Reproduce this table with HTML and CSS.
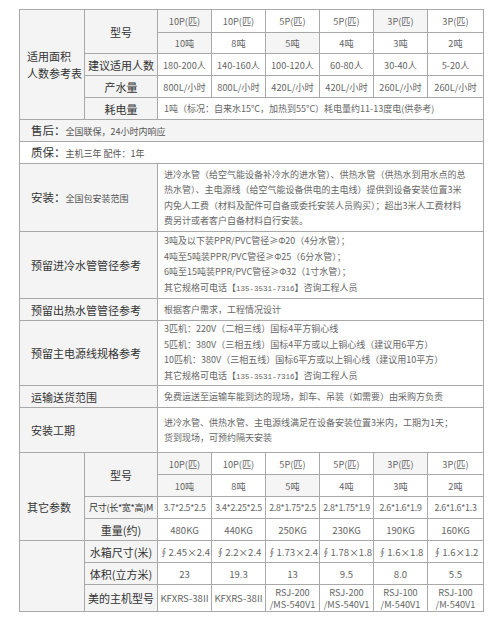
FILE: index.html
```html
<!DOCTYPE html>
<html lang="zh">
<head>
<meta charset="utf-8">
<link rel="stylesheet" href="styles.css">
</head>
<body>
<div class="page">
<table class="spec">
  <colgroup>
    <col class="c1"><col class="c2"><col class="cm"><col class="cm"><col class="cm"><col class="cm"><col class="cm"><col class="cl">
  </colgroup>
  <tbody>
    <tr class="h23">
      <td class="lab gray side" rowspan="5">适用面积<br>人数参考表</td>
      <td class="lab gray" rowspan="2">型号</td>
      <td class="val shade">10P(匹)</td><td class="val">10P(匹)</td><td class="val">5P(匹)</td><td class="val">5P(匹)</td><td class="val shade">3P(匹)</td><td class="val">3P(匹)</td>
    </tr>
    <tr class="h21">
      <td class="val shade">10吨</td><td class="val">8吨</td><td class="val shade">5吨</td><td class="val">4吨</td><td class="val">3吨</td><td class="val">2吨</td>
    </tr>
    <tr class="h22">
      <td class="lab gray">建议适用人数</td>
      <td class="val">180-200人</td><td class="val">140-160人</td><td class="val">100-120人</td><td class="val">60-80人</td><td class="val">30-40人</td><td class="val">5-20人</td>
    </tr>
    <tr class="h22">
      <td class="lab gray">产水量</td>
      <td class="val">800L/小时</td><td class="val">800L/小时</td><td class="val">420L/小时</td><td class="val">420L/小时</td><td class="val">260L/小时</td><td class="val">260L/小时</td>
    </tr>
    <tr class="h22">
      <td class="lab gray">耗电量</td>
      <td class="txt" colspan="6">1吨（标况：自来水15°C，加热到55°C）耗电量约11-13度电(供参考)</td>
    </tr>
    <tr class="h22">
      <td class="row gray" colspan="8"><span class="big">售后：</span><span class="small">全国联保，24小时内响应</span></td>
    </tr>
    <tr class="h22">
      <td class="row" colspan="8"><span class="big">质保：</span><span class="small">主机三年 配件：1年</span></td>
    </tr>
    <tr class="h68">
      <td class="row gray" colspan="2"><span class="big">安装：</span><span class="small">全国包安装范围</span></td>
      <td class="txt" colspan="6">进冷水管（给空气能设备补冷水的进水管）、供热水管（供热水到用水点的总<br>热水管）、主电源线（给空气能设备供电的主电线）提供到设备安装位置3米<br>内免人工费（材料及配件可自备或委托安装人员购买）；超出3米人工费材料<br>费另计或者客户自备材料自行安装。</td>
    </tr>
    <tr class="h67">
      <td class="row gray" colspan="2">预留进冷水管管径参考</td>
      <td class="txt" colspan="6">3吨及以下装PPR/PVC管径≥Φ20（4分水管）；<br>4吨至5吨装PPR/PVC管径≥Φ25（6分水管）；<br>6吨至15吨装PPR/PVC管径≥Φ32（1寸水管）；<br>其它规格可电话【<span class="tel">135-3531-7316</span>】咨询工程人员</td>
    </tr>
    <tr class="h22">
      <td class="row gray" colspan="2">预留出热水管管径参考</td>
      <td class="txt" colspan="6">根据客户需求，工程情况设计</td>
    </tr>
    <tr class="h65">
      <td class="row gray" colspan="2">预留主电源线规格参考</td>
      <td class="txt" colspan="6">3匹机：220V（二相三线）国标4平方铜心线<br>5匹机：380V（三相五线）国标4平方或以上铜心线（建议用6平方）<br>10匹机：380V（三相五线）国标6平方或以上铜心线（建议用10平方）<br>其它规格可电话【<span class="tel">135-3531-7316</span>】咨询工程人员</td>
    </tr>
    <tr class="h22">
      <td class="row gray" colspan="2">运输送货范围</td>
      <td class="txt" colspan="6">免费运送至运输车能到达的现场，卸车、吊装（如需要）由采购方负责</td>
    </tr>
    <tr class="h45">
      <td class="row gray" colspan="2">安装工期</td>
      <td class="txt" colspan="6">进冷水管、供热水管、主电源线满足在设备安装位置3米内，工期为1天；<br>货到现场，可预约隔天安装</td>
    </tr>
    <tr class="h22">
      <td class="lab gray side other" rowspan="4">其它参数</td>
      <td class="lab gray" rowspan="2">型号</td>
      <td class="val shade">10P(匹)</td><td class="val">10P(匹)</td><td class="val">5P(匹)</td><td class="val">5P(匹)</td><td class="val shade">3P(匹)</td><td class="val">3P(匹)</td>
    </tr>
    <tr class="h22">
      <td class="val shade">10吨</td><td class="val">8吨</td><td class="val shade">5吨</td><td class="val">4吨</td><td class="val">3吨</td><td class="val">2吨</td>
    </tr>
    <tr class="h22">
      <td class="lab gray tiny">尺寸(长*宽*高)M</td>
      <td class="val dim">3.7*2.5*2.5</td><td class="val dim">3.4*2.25*2.5</td><td class="val dim">2.8*1.75*2.5</td><td class="val dim">2.8*1.75*1.9</td><td class="val dim">2.6*1.6*1.9</td><td class="val dim">2.6*1.6*1.3</td>
    </tr>
    <tr class="h22">
      <td class="lab gray">重量(约)</td>
      <td class="val v2">480KG</td><td class="val v2">440KG</td><td class="val v2">250KG</td><td class="val v2">230KG</td><td class="val v2">190KG</td><td class="val v2">160KG</td>
    </tr>
    <tr class="h22">
      <td class="lab gray side" rowspan="3"></td>
      <td class="lab gray">水箱尺寸(米)</td>
      <td class="val v2">∮2.45×2.4</td><td class="val v2">∮2.2×2.4</td><td class="val v2">∮1.73×2.4</td><td class="val v2">∮1.78×1.8</td><td class="val v2">∮1.6×1.8</td><td class="val v2">∮1.6×1.2</td>
    </tr>
    <tr class="h22">
      <td class="lab gray">体积(立方米)</td>
      <td class="val v2">23</td><td class="val v2">19.3</td><td class="val v2">13</td><td class="val v2">9.5</td><td class="val v2">8.0</td><td class="val v2">5.5</td>
    </tr>
    <tr class="h27">
      <td class="lab gray">美的主机型号</td>
      <td class="val v2">KFXRS-38II</td><td class="val v2">KFXRS-38II</td><td class="val v2 two">RSJ-200<br>/MS-540V1</td><td class="val v2 two">RSJ-200<br>/MS-540V1</td><td class="val v2 two">RSJ-100<br>/M-540V1</td><td class="val v2 two">RSJ-100<br>/M-540V1</td>
    </tr>
  </tbody>
</table>
</div>
</body>
</html>
```
FILE: styles.css
```css
html, body {
  margin: 0;
  padding: 0;
  background: #ffffff;
}

.page {
  padding: 9px 19px 0 19px;
  font-family: "Noto Sans CJK SC", "Noto Sans", sans-serif;
}

.spec {
  width: 462px;
  table-layout: fixed;
  border-collapse: collapse;
  color: #555;
}

.c1 { width: 65px; }
.c2 { width: 73px; }
.cm { width: 54px; }
.cl { width: 56px; }

.spec td {
  border: 1px solid #a9a9a9;
  padding: 0;
  vertical-align: middle;
  white-space: nowrap;
  overflow: hidden;
}

.spec td.gray { background: #f4f4f4; }
.spec td.shade { background: #f5f5f5; }

.spec td.lab {
  font-size: 11px;
  line-height: 14px;
  color: #333;
  text-align: center;
}

.spec td.side {
  text-align: left;
  padding-left: 7px;
  line-height: 17px;
}

.spec td.other {
  padding-top: 22px;
}

.spec td.tiny {
  font-size: 9px;
  letter-spacing: -0.3px;
}

.spec td.val {
  font-size: 9.2px;
  line-height: 12px;
  text-align: center;
  color: #666;
}

.spec td.v2 {
  font-size: 9.6px;
}

.spec td.dim {
  font-size: 8.8px;
  letter-spacing: -0.25px;
}

.spec td.two {
  font-size: 9.2px;
  line-height: 12.5px;
}

.spec td.txt {
  font-size: 9px;
  color: #666;
  padding: 0 6px;
  line-height: 15.5px;
}

.spec td.row {
  font-size: 11px;
  line-height: 14px;
  color: #333;
  padding: 0 11px;
}

.big {
  font-size: 11.5px;
  color: #333;
}

.small {
  font-size: 9px;
  color: #555;
}

.tel {
  font-family: "Liberation Mono", "DejaVu Sans Mono", monospace;
  font-size: 7.5px;
}

.h21 { height: 21px; }
.h22 { height: 22px; }
.h23 { height: 23px; }
.h27 { height: 27px; }
.h45 { height: 45px; }
.h65 { height: 65px; }
.h67 { height: 67px; }
.h68 { height: 68px; }
```
